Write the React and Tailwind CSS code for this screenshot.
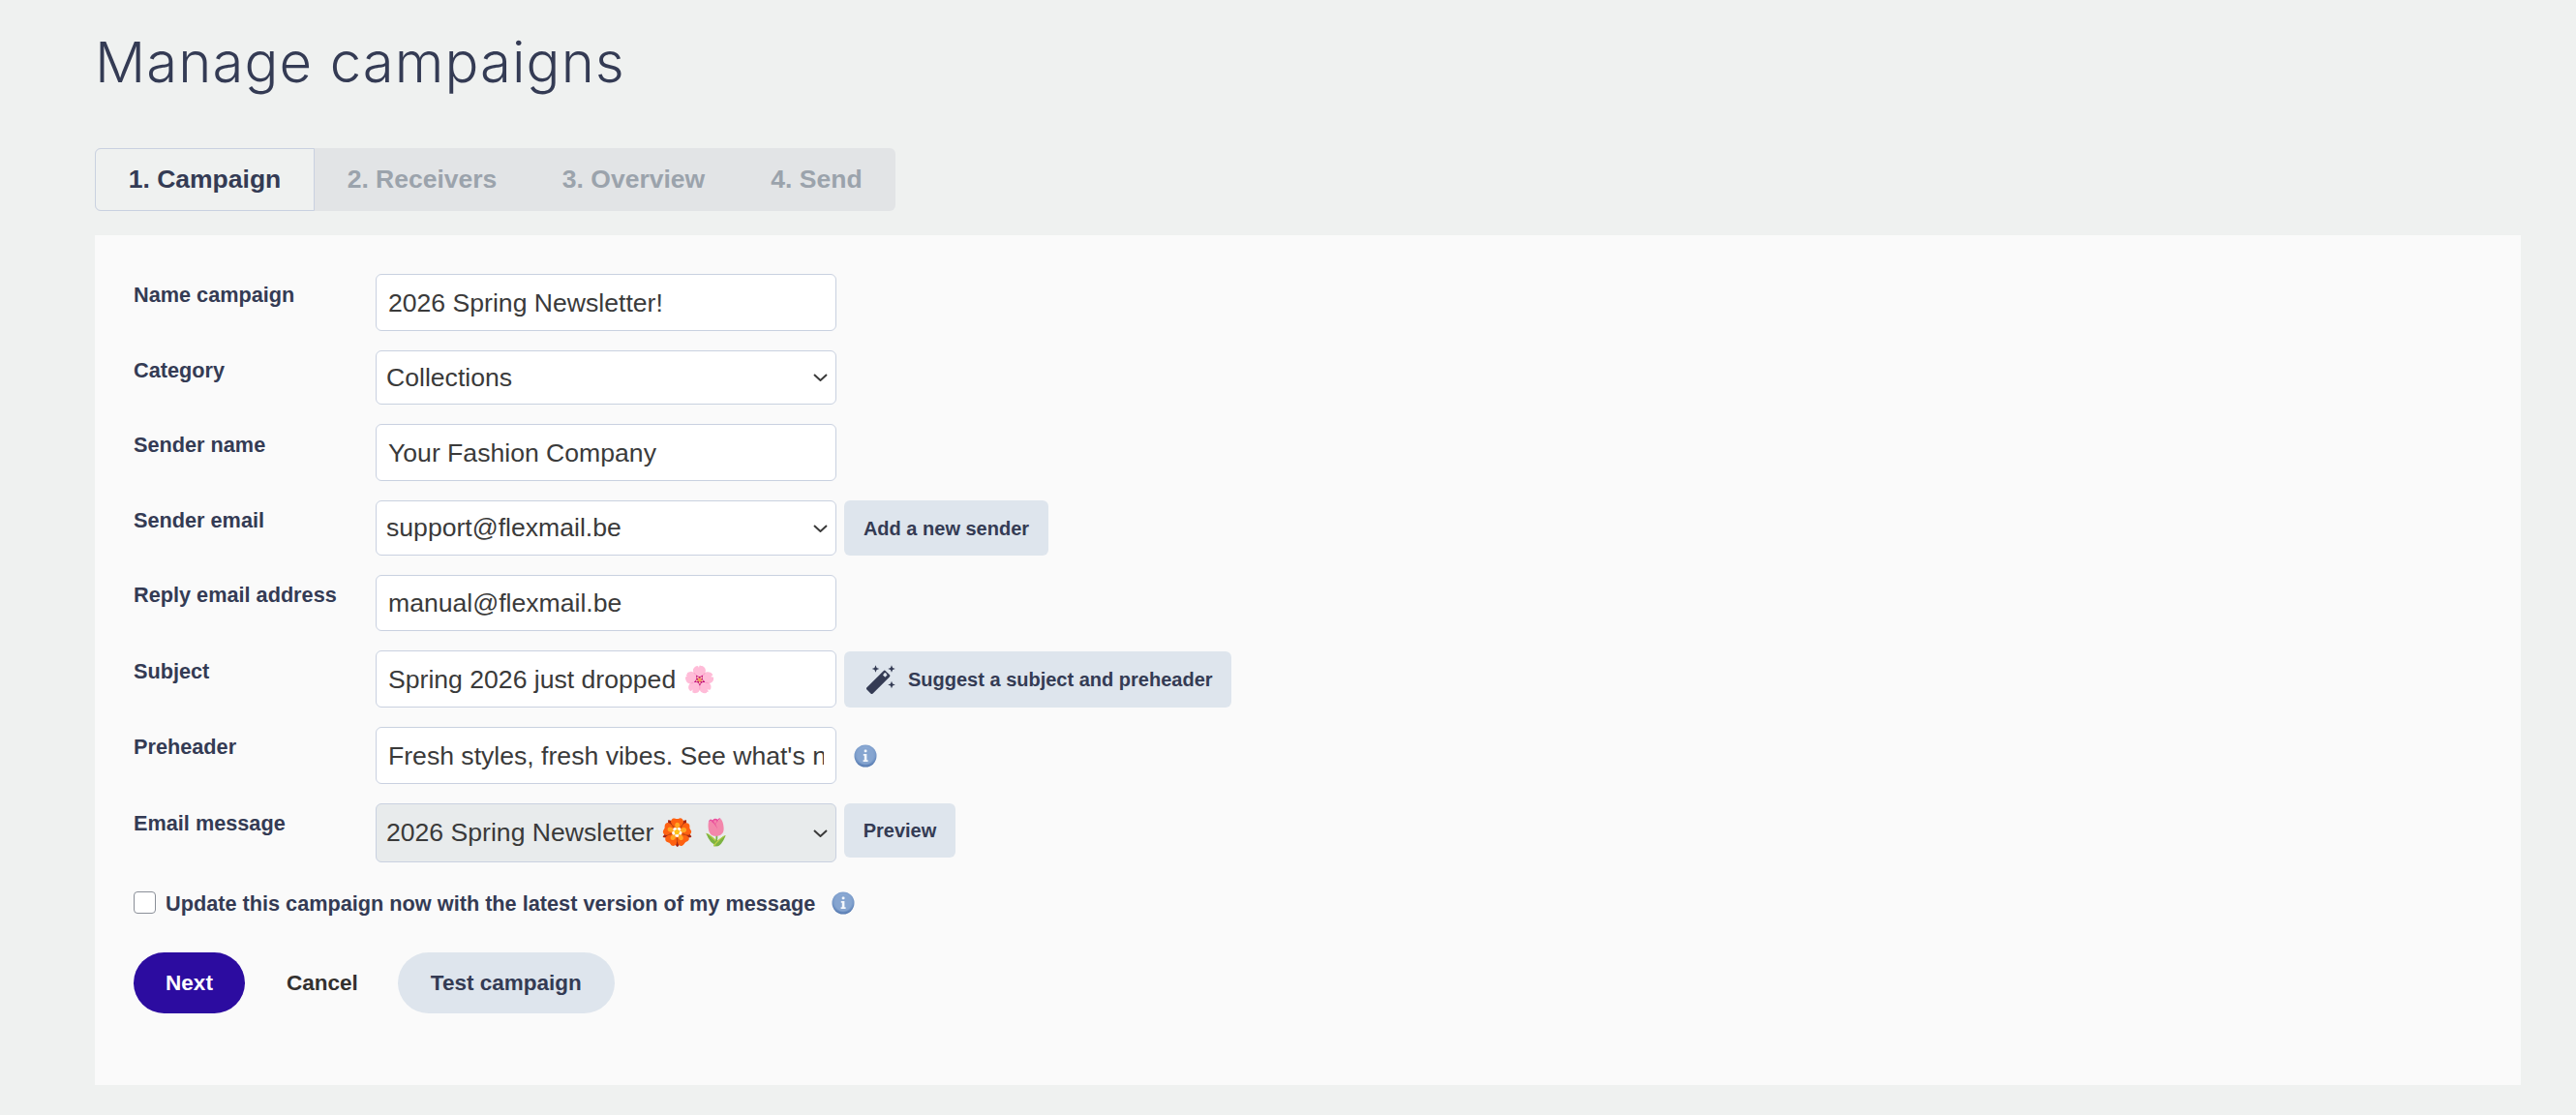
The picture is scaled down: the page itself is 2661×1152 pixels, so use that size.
import React from "react";

function Info({ className = "" }) {
  return (
    <svg viewBox="0 0 24 24" className={`w-6 h-6 shrink-0 ${className}`}>
      <defs>
        <radialGradient id="ig" cx="50%" cy="40%" r="60%">
          <stop offset="0%" stopColor="#a6bfe3" />
          <stop offset="75%" stopColor="#7b9cca" />
          <stop offset="100%" stopColor="#4f74ad" />
        </radialGradient>
      </defs>
      <circle cx="12" cy="12" r="11.5" fill="url(#ig)" />
      <circle cx="12" cy="12" r="8.6" fill="#86a5d0" />
      <rect x="10.7" y="5.5" width="2.8" height="2.8" rx="1" fill="#f2f6fb" />
      <path d="M9.8 10h3.6v6.2h1.2V18H9.6v-1.8h1.2v-4.4h-1z" fill="#f2f6fb" />
    </svg>
  );
}

function Wand() {
  const star = (x, y) => `M${x} ${y - 3.8}L${x + 1.1} ${y - 1.1}L${x + 3.8} ${y}L${x + 1.1} ${y + 1.1}L${x} ${y + 3.8}L${x - 1.1} ${y + 1.1}L${x - 3.8} ${y}L${x - 1.1} ${y - 1.1}Z`;
  return (
    <svg viewBox="0 0 30 30" className="h-[30px] w-[30px] shrink-0" fill="#343b54">
      <path d={star(9.5, 4)} />
      <path d={star(26, 4)} />
      <path d={star(26, 20.5)} />
      <path d="M17.6 6.2a1.6 1.6 0 0 1 2.3 0l3.9 3.9a1.6 1.6 0 0 1 0 2.3L6.7 29.5a1.6 1.6 0 0 1-2.3 0L.5 25.6a1.6 1.6 0 0 1 0-2.3z" />
      <rect x="17.6" y="8.6" width="3.4" height="3.4" rx="0.6" fill="#dee5ed" transform="rotate(45 19.3 10.3)" />
    </svg>
  );
}

function Select({ height, bg, children }) {
  return (
    <div className="relative w-[476px] shrink-0">
      <select className={`${height} ${bg} w-full appearance-none rounded-[6px] border border-[#c9d1e0] pl-[10px] pr-[30px] pt-[1px] text-[26.6px] text-[#3a3a3a] outline-none`}>
        <option>{children}</option>
      </select>
      <svg viewBox="0 0 15 8" className="pointer-events-none absolute right-[9px] top-1/2 h-[8px] w-[15px] -translate-y-1/2" fill="none" stroke="#3a3a3a" strokeWidth="2">
        <path d="M1 1l6.5 6L14 1" />
      </svg>
    </div>
  );
}

const inputCls =
  "w-[476px] rounded-[6px] border border-[#c9d1e0] bg-white px-[12px] pt-[1px] text-[26.6px] text-[#3a3a3a] outline-none";
const smallBtn =
  "flex items-center justify-center rounded-[6px] bg-[#dee5ed] text-[20px] font-bold text-[#343b54] ml-[8px]";

function Row({ label, top = "pt-[8px]", children }) {
  return (
    <div className="flex items-start">
      <label className={`w-[250px] shrink-0 ${top} text-[21.7px] font-bold leading-[26px] text-[#343b54]`}>{label}</label>
      {children}
    </div>
  );
}

export default function App() {
  return (
    <div className="min-h-[1152px] bg-[#eff1f0] pl-[98px] pr-[57px] pt-0 pb-[31px] font-['Liberation_Sans',Arial,sans-serif]">
      <h1 className="h-[153px] pt-[26px] font-['Inter',sans-serif] text-[58px] font-[350] leading-[76px] tracking-[1.1px] text-[#343b54]">
        Manage campaigns
      </h1>
      <div className="flex h-[65px] w-[827px] rounded-[6px] bg-[#e2e4e6] text-[26.5px] font-bold text-[#9ba3ac]">
        <div className="flex w-[227px] items-center justify-center rounded-l-[6px] border border-[#c9d1e0] bg-[#eff1f0] text-[#343b54]">1. Campaign</div>
        <div className="flex w-[222px] items-center justify-center">2. Receivers</div>
        <div className="flex w-[215px] items-center justify-center">3. Overview</div>
        <div className="flex w-[163px] items-center justify-center">4. Send</div>
      </div>
      <div className="mt-[25px] h-[878px] bg-[#fafafa] pl-[40px] pt-[40px]">
        <div className="flex flex-col gap-[20px]">
          <Row label="Name campaign" top="pt-[9px]">
            <input readOnly value="2026 Spring Newsletter!" className={`${inputCls} h-[59px]`} />
          </Row>
          <Row label="Category">
            <Select height="h-[56px]" bg="bg-white">Collections</Select>
          </Row>
          <Row label="Sender name" top="pt-[9px]">
            <input readOnly value="Your Fashion Company" className={`${inputCls} h-[59px]`} />
          </Row>
          <Row label="Sender email">
            <Select height="h-[57px]" bg="bg-white">support@flexmail.be</Select>
            <button className={`${smallBtn} h-[57px] w-[211px]`}>Add a new sender</button>
          </Row>
          <Row label="Reply email address">
            <input readOnly value="manual@flexmail.be" className={`${inputCls} h-[58px]`} />
          </Row>
          <Row label="Subject" top="pt-[9px]">
            <input readOnly value="Spring 2026 just dropped 🌸" className={`${inputCls} h-[59px]`} />
            <button className={`${smallBtn} mt-[1px] h-[58px] w-[400px] !justify-start gap-[13px] pl-[23px]`}>
              <Wand />
              Suggest a subject and preheader
            </button>
          </Row>
          <Row label="Preheader">
            <input readOnly value="Fresh styles, fresh vibes. See what's new this spring" className={`${inputCls} h-[59px]`} />
            <div className="flex h-[59px] items-center pl-[18px]"><Info /></div>
          </Row>
          <Row label="Email message">
            <Select height="h-[61px]" bg="bg-[#e8ebec]">2026 Spring Newsletter 🏵️ 🌷</Select>
            <button className={`${smallBtn} h-[56px] w-[115px]`}>Preview</button>
          </Row>
        </div>
        <div className="mt-[30px] flex h-[23px] items-center">
          <input type="checkbox" className="m-0 h-[23px] w-[23px] appearance-none rounded-[4px] border border-[#8a8f98] bg-white" />
          <span className="ml-[10px] translate-y-[2px] text-[21.7px] font-bold text-[#343b54]">Update this campaign now with the latest version of my message</span>
          <Info className="ml-[17px]" />
        </div>
        <div className="mt-[40px] flex items-center">
          <button className="h-[63px] w-[115px] rounded-full bg-[#2c0ca0] text-[22.5px] font-bold text-white">Next</button>
          <button className="ml-[43px] text-[22.5px] font-bold text-[#33302e]">Cancel</button>
          <button className="ml-[41px] h-[63px] w-[224px] rounded-full bg-[#dee5ed] text-[22.5px] font-bold text-[#343b54]">Test campaign</button>
        </div>
      </div>
    </div>
  );
}
